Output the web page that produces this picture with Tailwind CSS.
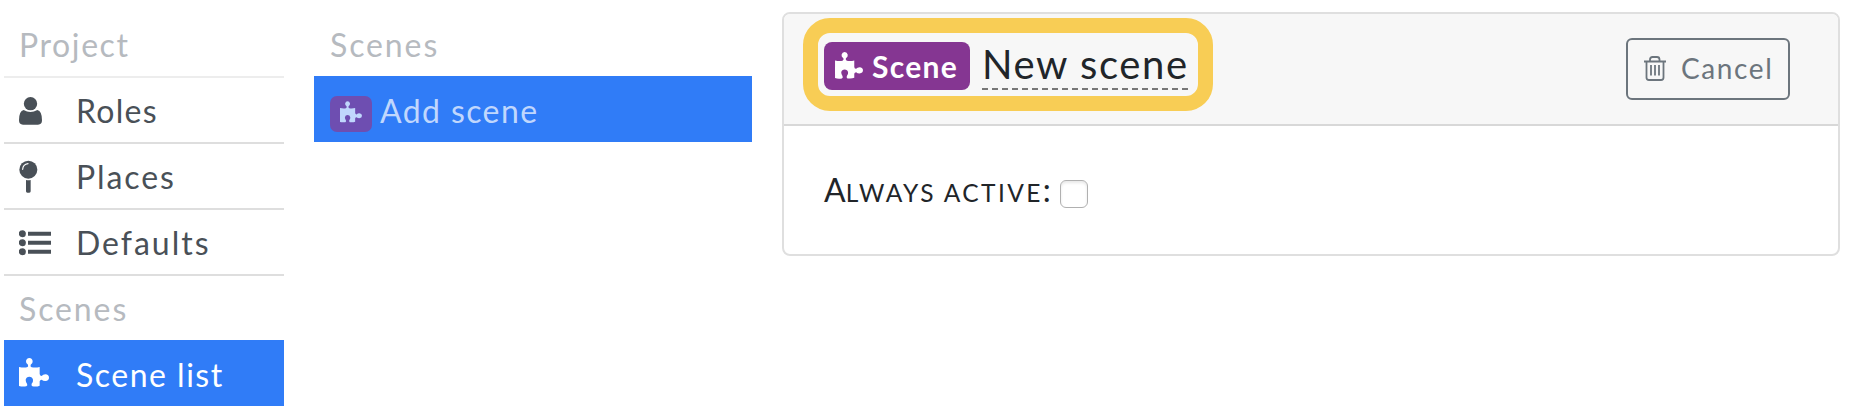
<!DOCTYPE html>
<html lang="en">
<head>
<meta charset="utf-8">
<title>Scenes</title>
<script src="https://cdn.jsdelivr.net/npm/@tailwindcss/browser@4"></script>
</head>
<body class="bg-white w-[1854px] h-[412px] overflow-hidden font-['Lato',sans-serif] text-[32px] leading-[40px] text-[#495057]">
<svg class="hidden">
  <symbol id="puzzle" viewBox="0 0 90 87">
    <path fill="currentColor" d="M0 27Q14 30 24 28Q29 26 27 20Q20 16 21 9Q23 0 31 0Q39 0 41 9Q42 16 35 20Q33 26 38 28Q50 30 62 27V48Q63 54 68 54Q72 49 79 49Q90 50 90 59Q90 68 79 69Q72 69 68 65Q63 65 62 70V83Q53 87 40 85Q36 82 38 77Q43 72 42 65Q40 56 31 56Q22 56 20 65Q20 72 24 77Q27 82 22 85Q10 87 0 84Z"/>
  </symbol>
</svg>
<div class="flex h-full pl-1">
  <nav class="w-[280px] pt-[10px]">
    <div class="h-[66px] pt-[15px] pl-[15px] text-[#b6babf]"><span class="tracking-[1.6px]">Project</span></div>
    <div class="flex h-[66px] border-t-2 border-[#ededed] pt-[13px] pl-[15px]">
      <div class="w-[57px] pt-[6px]"><svg class="w-[23px] h-[28px]" viewBox="0 0 69 84" fill="currentColor"><circle cx="34.500" cy="20" r="20"/><path d="M14 39Q34 51 55 39Q69 42 69 70Q69 83 57 83H12Q0 83 0 70Q0 42 14 39Z"/></svg></div>
      <span class="tracking-[1.3px]">Roles</span>
    </div>
    <div class="flex h-[66px] border-t-2 border-[#dedede] pt-[13px] pl-[15px]">
      <div class="w-[57px] pt-[3px]"><svg class="w-[19px] h-[33px]" viewBox="0 0 57 99" fill="currentColor"><circle cx="28" cy="29" r="27"/><path d="M21 60Q28 62 35 60V94Q35 98 31 98H25Q21 98 21 94Z"/><path d="M11 28Q12 13 27 11" fill="none" stroke="white" stroke-width="3.500" stroke-linecap="round"/></svg></div>
      <span class="tracking-[1.9px]">Places</span>
    </div>
    <div class="flex h-[66px] border-t-2 border-[#dedede] pt-[13px] pl-[15px]">
      <div class="w-[57px] pt-[7px]"><svg class="w-[32px] h-[26px]" viewBox="0 0 96 78" fill="currentColor"><circle cx="10" cy="11" r="10.500"/><circle cx="10" cy="38" r="10.500"/><circle cx="10" cy="65" r="10.500"/><path d="M27 5h69v12H27zM27 32h69v12H27zM27 59h69v12H27z"/></svg></div>
      <span class="tracking-[2px]">Defaults</span>
    </div>
    <div class="h-[66px] border-t-2 border-[#dedede] pt-[13px] pl-[15px] text-[#b6babf]"><span class="tracking-[1.9px]">Scenes</span></div>
    <div class="flex h-[66px] bg-[#307cf7] pt-[15px] pl-[15px] text-white">
      <div class="w-[57px] pt-[3px]"><svg class="w-[30px] h-[29px]"><use href="#puzzle"/></svg></div>
      <span class="tracking-[1.5px]">Scene list</span>
    </div>
  </nav>
  <section class="ml-[30px] w-[438px] pt-[10px]">
    <div class="h-[66px] pt-[15px] pl-[16px] text-[#b6babf]"><span class="tracking-[1.9px]">Scenes</span></div>
    <div class="flex h-[66px] bg-[#307cf7] pt-[15px] pl-[16px] text-[#c0d7fd]">
      <div class="mt-[5px] mr-2 flex h-[36px] w-[42px] justify-center rounded-[7px] bg-[#6e4eb1] pt-[5px]"><svg class="w-[22px] h-[22px]"><use href="#puzzle"/></svg></div>
      <span class="tracking-[1.4px]">Add scene</span>
    </div>
  </section>
  <main class="mt-3 ml-[30px] h-[244px] w-[1058px] rounded-lg border-2 border-[#dfdfdf] overflow-hidden">
    <header class="flex h-[112px] justify-between border-b-2 border-[#d8d8d8] bg-[#f7f7f7] pr-[48px] pl-[19px]">
      <div class="mt-1 flex h-[93px] w-[410px] rounded-[27px] border-[15px] border-[#f8cd55] pt-[9px] pl-[6px]">
        <div class="flex h-[48px] w-[146px] shrink-0 rounded-lg bg-[#853692] pl-[11px] text-[30px] font-bold text-white">
          <svg class="mt-[10px] mr-[9px] w-[28px] h-[27px]"><use href="#puzzle"/></svg>
          <span class="pt-[4px] tracking-[1.3px]">Scene</span>
        </div>
        <div class="ml-3 h-[48px] w-[206px] shrink-0 bg-[repeating-linear-gradient(90deg,#777_0_6px,transparent_6px_10px)] bg-[length:100%_2px] bg-bottom bg-no-repeat pt-[2px] text-[40px] text-[#212529]"><span class="tracking-[1.6px] whitespace-nowrap">New scene</span></div>
      </div>
      <button class="mt-6 flex h-[62px] w-[164px] rounded-md border-2 border-[#6c757d] pt-[8px] pl-4 text-[28px] text-[#6c757d]">
        <svg class="mt-2 mr-[15px] w-[22px] h-[25px]" viewBox="0 0 22 25" fill="none" stroke="currentColor" stroke-width="1.800"><path d="M0 5.500H22M6 5V3.500Q6 1 8.500 1H13Q15.500 1 15.500 3.500V5M2.500 6V21.500Q2.500 24 5 24H17Q19.500 24 19.500 21.500V6M7 9V19.500M11 9V19.500M15 9V19.500"/></svg>
        <span class="tracking-[1.6px]">Cancel</span>
      </button>
    </header>
    <div class="flex pt-[44px] pl-[40px] text-[#212529]">
      <div class="w-[228px] whitespace-nowrap">A<span class="text-[24.5px] tracking-[2.400px] uppercase">lways active</span>:</div>
      <div class="mt-[10px] ml-2 h-[28px] w-[28px] rounded-[6px] border border-[#b0b0b0] shadow-[inset_0_2px_3px_#e8e8e8]"></div>
    </div>
  </main>
</div>
</body>
</html>
